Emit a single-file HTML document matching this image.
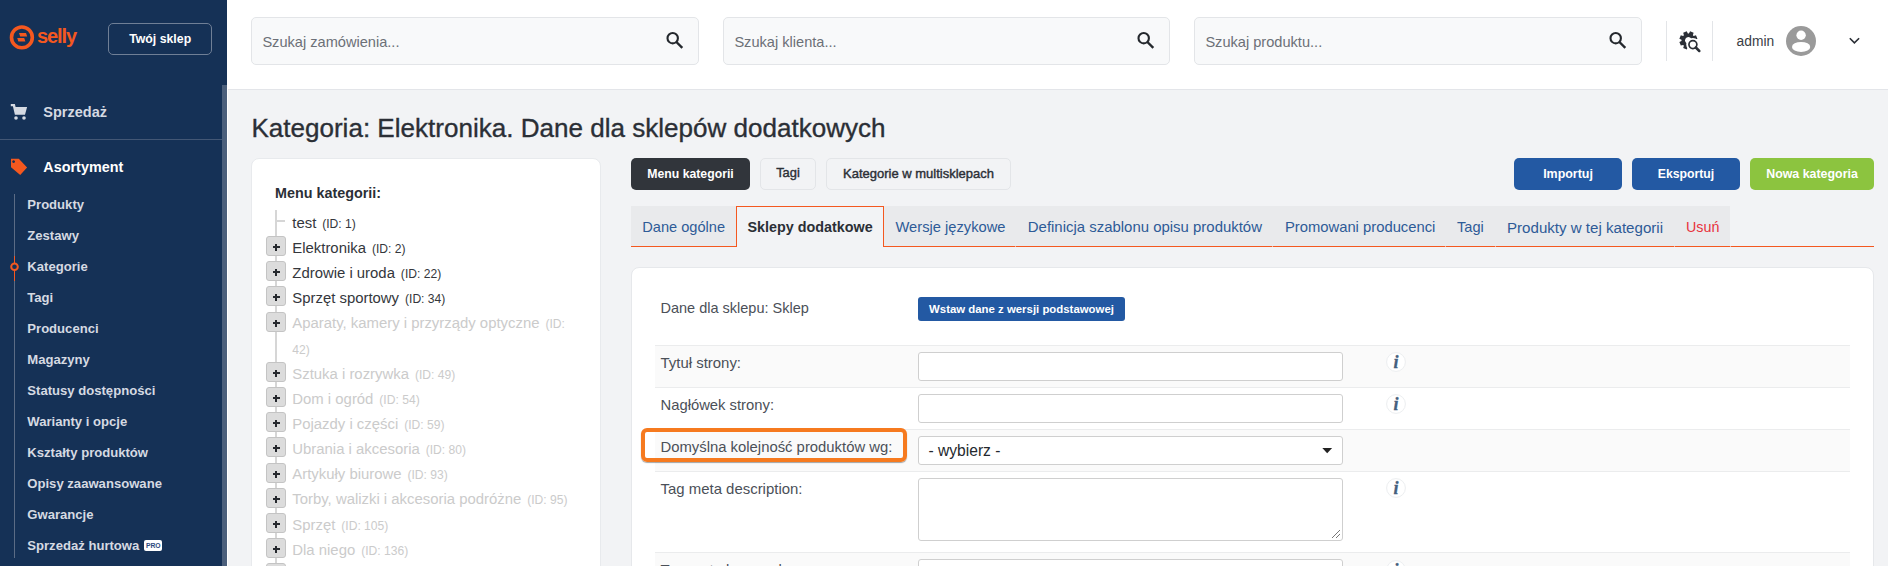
<!DOCTYPE html>
<html><head><meta charset="utf-8"><style>
html,body{margin:0;padding:0;}
body{width:1888px;height:566px;overflow:hidden;position:relative;background:#f2f3f5;font-family:'Liberation Sans', sans-serif;}
.t{position:absolute;white-space:nowrap;line-height:1;}
.b{position:absolute;box-sizing:border-box;}
svg{position:absolute;overflow:visible;}
</style></head><body>
<div class="b" style="left:0px;top:0px;width:227px;height:566px;background:#153156;"></div>
<div class="b" style="left:222px;top:85px;width:5px;height:481px;background:#4b5f7b;"></div>
<svg style="left:0;top:0" width="100" height="70">
<circle cx="21.9" cy="37.4" r="10.4" fill="none" stroke="#f4581f" stroke-width="3.6"/>
<polygon points="19,33.1 26,33.1 27.2,36.6 20.2,36.6" fill="#f4581f"/>
<polygon points="17.2,38.1 24.2,38.1 25.4,41.5 18.4,41.5" fill="#f4581f"/>
</svg>
<div class="t" style="left:37.0px;top:26.4px;font-size:20px;font-weight:700;color:#f4581f;letter-spacing:-1.1px;">selly</div>
<div class="b" style="left:108px;top:23px;width:104px;height:32px;border:1px solid #6f7f96;border-radius:5px;"></div>
<div class="t" style="left:129.2px;top:32.9px;font-size:12.3px;font-weight:700;color:#ffffff;">Twój sklep</div>
<svg style="left:0;top:0" width="40" height="130">
<polygon points="10.8,104 14.9,104 15.6,106.9 27.1,106.9 25,114.7 14.9,114.7 12.9,106.2 10.8,106.2" fill="#d5dae2"/>
<circle cx="16" cy="118" r="1.8" fill="#d5dae2"/>
<circle cx="24" cy="118" r="1.8" fill="#d5dae2"/>
</svg>
<div class="t" style="left:43.3px;top:104.7px;font-size:14.5px;font-weight:700;color:#d5dae2;">Sprzedaż</div>
<div class="b" style="left:0px;top:139px;width:222px;height:1px;background:#435775;"></div>
<svg style="left:0;top:0" width="40" height="190">
<path d="M11,158.8 L18.8,158.8 L27.1,167.5 L20.2,174.9 L11,167.3 Z M13.6,160.2 a1.4,1.4 0 1,0 0.01,0 Z" fill="#f4581f" fill-rule="evenodd"/>
</svg>
<div class="t" style="left:43.3px;top:160.2px;font-size:14.4px;font-weight:700;color:#ffffff;">Asortyment</div>
<div class="b" style="left:14px;top:194px;width:1px;height:364px;background:#5b6c85;"></div>
<div class="b" style="left:14px;top:256px;width:1px;height:25px;background:#f4581f;"></div>
<svg style="left:0;top:0" width="40" height="300"><circle cx="14.5" cy="266.8" r="3.3" fill="#153156" stroke="#f4581f" stroke-width="2"/></svg>
<div class="t" style="left:27.3px;top:198.3px;font-size:13.1px;font-weight:700;color:#d5dae2;">Produkty</div>
<div class="t" style="left:27.3px;top:229.3px;font-size:13.1px;font-weight:700;color:#d5dae2;">Zestawy</div>
<div class="t" style="left:27.3px;top:260.2px;font-size:13.1px;font-weight:700;color:#d5dae2;">Kategorie</div>
<div class="t" style="left:27.3px;top:291.2px;font-size:13.1px;font-weight:700;color:#d5dae2;">Tagi</div>
<div class="t" style="left:27.3px;top:322.1px;font-size:13.1px;font-weight:700;color:#d5dae2;">Producenci</div>
<div class="t" style="left:27.3px;top:353.1px;font-size:13.1px;font-weight:700;color:#d5dae2;">Magazyny</div>
<div class="t" style="left:27.3px;top:384.0px;font-size:13.1px;font-weight:700;color:#d5dae2;">Statusy dostępności</div>
<div class="t" style="left:27.3px;top:415.0px;font-size:13.1px;font-weight:700;color:#d5dae2;">Warianty i opcje</div>
<div class="t" style="left:27.3px;top:445.9px;font-size:13.1px;font-weight:700;color:#d5dae2;">Kształty produktów</div>
<div class="t" style="left:27.3px;top:476.9px;font-size:13.1px;font-weight:700;color:#d5dae2;">Opisy zaawansowane</div>
<div class="t" style="left:27.3px;top:507.8px;font-size:13.1px;font-weight:700;color:#d5dae2;">Gwarancje</div>
<div class="t" style="left:27.3px;top:538.8px;font-size:13.1px;font-weight:700;color:#d5dae2;">Sprzedaż hurtowa</div>
<div class="b" style="left:144px;top:540px;width:18px;height:11px;background:#ffffff;border-radius:2px;"></div>
<div class="t" style="left:145.9px;top:543.3px;font-size:6.8px;font-weight:700;color:#2e4a7e;">PRO</div>
<div class="b" style="left:227px;top:0px;width:1661px;height:89px;background:#ffffff;"></div>
<div class="b" style="left:228px;top:89px;width:1660px;height:1px;background:#e3e5e9;"></div>
<div class="b" style="left:227px;top:89px;width:1px;height:477px;background:#ffffff;"></div>
<div class="b" style="left:251px;top:17px;width:448px;height:48px;background:#f8f9fa;border:1px solid #e3e5e8;border-radius:5px;"></div>
<div class="t" style="left:262.4px;top:34.6px;font-size:14.6px;font-weight:400;color:#6c7077;">Szukaj zamówienia...</div>
<svg style="left:666px;top:31px" width="20" height="20">
<circle cx="6.7" cy="7.2" r="5.2" fill="none" stroke="#24282d" stroke-width="2.1"/>
<line x1="10.4" y1="11" x2="16.3" y2="16.9" stroke="#24282d" stroke-width="2.4"/>
</svg>
<div class="b" style="left:723px;top:17px;width:447px;height:48px;background:#f8f9fa;border:1px solid #e3e5e8;border-radius:5px;"></div>
<div class="t" style="left:734.4px;top:34.6px;font-size:14.6px;font-weight:400;color:#6c7077;">Szukaj klienta...</div>
<svg style="left:1137px;top:31px" width="20" height="20">
<circle cx="6.7" cy="7.2" r="5.2" fill="none" stroke="#24282d" stroke-width="2.1"/>
<line x1="10.4" y1="11" x2="16.3" y2="16.9" stroke="#24282d" stroke-width="2.4"/>
</svg>
<div class="b" style="left:1194px;top:17px;width:448px;height:48px;background:#f8f9fa;border:1px solid #e3e5e8;border-radius:5px;"></div>
<div class="t" style="left:1205.4px;top:34.6px;font-size:14.6px;font-weight:400;color:#6c7077;">Szukaj produktu...</div>
<svg style="left:1609px;top:31px" width="20" height="20">
<circle cx="6.7" cy="7.2" r="5.2" fill="none" stroke="#24282d" stroke-width="2.1"/>
<line x1="10.4" y1="11" x2="16.3" y2="16.9" stroke="#24282d" stroke-width="2.4"/>
</svg>
<div class="b" style="left:1666px;top:21px;width:1px;height:40px;background:#e3e5e8;"></div>
<div class="b" style="left:1712px;top:21px;width:1px;height:40px;background:#e3e5e8;"></div>
<svg style="left:1672px;top:24px" width="36" height="32">
<defs><clipPath id="gc"><path d="M-5,-5 H40 V40 H-5 Z M14.2,20.6 a6.7,6.7 0 1,0 13.4,0 a6.7,6.7 0 1,0 -13.4,0 Z" clip-rule="evenodd"/></clipPath></defs>
<g clip-path="url(#gc)" fill="#2b2f36">
<path fill-rule="evenodd" d="M16.94,9.52 L18.08,7.35 L21.61,8.82 L20.88,11.15 L21.65,11.92 L23.98,11.19 L25.45,14.72 L23.28,15.86 L23.28,16.94 L25.45,18.08 L23.98,21.61 L21.65,20.88 L20.88,21.65 L21.61,23.98 L18.08,25.45 L16.94,23.28 L15.86,23.28 L14.72,25.45 L11.19,23.98 L11.92,21.65 L11.15,20.88 L8.82,21.61 L7.35,18.08 L9.52,16.94 L9.52,15.86 L7.35,14.72 L8.82,11.19 L11.15,11.92 L11.92,11.15 L11.19,8.82 L14.72,7.35 L15.86,9.52 Z M16.4,13.0 a3.4,3.4 0 1,0 0.01,0 Z"/>
</g>
<circle cx="20.9" cy="20.6" r="3.95" fill="none" stroke="#2b2f36" stroke-width="1.7"/>
<line x1="23.8" y1="23.5" x2="27.3" y2="27.0" stroke="#2b2f36" stroke-width="2.5" stroke-linecap="round"/>
</svg>
<div class="t" style="left:1736.6px;top:34.7px;font-size:13.8px;font-weight:400;color:#3a3e45;">admin</div>
<svg style="left:1786px;top:26px" width="30" height="30">
<circle cx="15" cy="15" r="15" fill="#9a9a9a"/>
<circle cx="15.1" cy="9.2" r="4.7" fill="#ffffff"/>
<ellipse cx="15.1" cy="20.9" rx="9.1" ry="5.0" fill="#ffffff"/>
</svg>
<svg style="left:1846.5px;top:35px" width="14" height="12">
<polyline points="2.8,3.2 7.4,7.9 12.1,3.2" fill="none" stroke="#2b2f36" stroke-width="1.6"/>
</svg>
<div class="t" style="left:251.4px;top:115.4px;font-size:26.05px;font-weight:400;color:#2b2f36;-webkit-text-stroke:0.35px #2b2f36;">Kategoria: Elektronika. Dane dla sklepów dodatkowych</div>
<div class="b" style="left:251px;top:158px;width:350px;height:420px;background:#ffffff;border:1px solid #e8eaed;border-radius:8px;"></div>
<div class="t" style="left:275.0px;top:185.9px;font-size:14.35px;font-weight:700;color:#2b2f36;">Menu kategorii:</div>
<div class="b" style="left:275px;top:210px;width:2px;height:356px;background:#d6d6d6;"></div>
<div class="b" style="left:275px;top:220px;width:10px;height:2px;background:#d6d6d6;"></div>
<div class="t" style="left:292.3px;top:215.7px;font-size:14.9px;font-weight:400;color:#34373c;">test <span style="font-size:12.1px;margin-left:1.8px">(ID: 1)</span></div>
<div class="b" style="left:266px;top:236px;width:20px;height:20px;background:#dcdcdc;border:1px solid #c4c4c4;border-radius:3px;"></div>
<div class="b" style="left:272.5px;top:246.3px;width:7px;height:1.4px;background:#26292e;"></div>
<div class="b" style="left:275.3px;top:243.5px;width:1.4px;height:7px;background:#26292e;"></div>
<div class="t" style="left:292.3px;top:240.8px;font-size:14.9px;font-weight:400;color:#34373c;">Elektronika <span style="font-size:12.1px;margin-left:1.8px">(ID: 2)</span></div>
<div class="b" style="left:266px;top:261px;width:20px;height:20px;background:#dcdcdc;border:1px solid #c4c4c4;border-radius:3px;"></div>
<div class="b" style="left:272.5px;top:271.3px;width:7px;height:1.4px;background:#26292e;"></div>
<div class="b" style="left:275.3px;top:268.5px;width:1.4px;height:7px;background:#26292e;"></div>
<div class="t" style="left:292.3px;top:266.0px;font-size:14.9px;font-weight:400;color:#34373c;">Zdrowie i uroda <span style="font-size:12.1px;margin-left:1.8px">(ID: 22)</span></div>
<div class="b" style="left:266px;top:286px;width:20px;height:20px;background:#dcdcdc;border:1px solid #c4c4c4;border-radius:3px;"></div>
<div class="b" style="left:272.5px;top:296.3px;width:7px;height:1.4px;background:#26292e;"></div>
<div class="b" style="left:275.3px;top:293.5px;width:1.4px;height:7px;background:#26292e;"></div>
<div class="t" style="left:292.3px;top:291.1px;font-size:14.9px;font-weight:400;color:#34373c;">Sprzęt sportowy <span style="font-size:12.1px;margin-left:1.8px">(ID: 34)</span></div>
<div class="b" style="left:266px;top:312px;width:20px;height:20px;background:#dcdcdc;border:1px solid #c4c4c4;border-radius:3px;"></div>
<div class="b" style="left:272.5px;top:322.3px;width:7px;height:1.4px;background:#26292e;"></div>
<div class="b" style="left:275.3px;top:319.5px;width:1.4px;height:7px;background:#26292e;"></div>
<div class="t" style="left:292.3px;top:316.3px;font-size:14.9px;font-weight:400;color:#cbcbcb;">Aparaty, kamery i przyrządy optyczne <span style="font-size:12.1px;margin-left:1.8px">(ID:</span></div>
<div class="t" style="left:292.3px;top:343.8px;font-size:12.1px;font-weight:400;color:#cbcbcb;">42)</div>
<div class="b" style="left:266px;top:362px;width:20px;height:20px;background:#dcdcdc;border:1px solid #c4c4c4;border-radius:3px;"></div>
<div class="b" style="left:272.5px;top:372.3px;width:7px;height:1.4px;background:#26292e;"></div>
<div class="b" style="left:275.3px;top:369.5px;width:1.4px;height:7px;background:#26292e;"></div>
<div class="t" style="left:292.3px;top:366.6px;font-size:14.9px;font-weight:400;color:#cbcbcb;">Sztuka i rozrywka <span style="font-size:12.1px;margin-left:1.8px">(ID: 49)</span></div>
<div class="b" style="left:266px;top:387px;width:20px;height:20px;background:#dcdcdc;border:1px solid #c4c4c4;border-radius:3px;"></div>
<div class="b" style="left:272.5px;top:397.3px;width:7px;height:1.4px;background:#26292e;"></div>
<div class="b" style="left:275.3px;top:394.5px;width:1.4px;height:7px;background:#26292e;"></div>
<div class="t" style="left:292.3px;top:391.7px;font-size:14.9px;font-weight:400;color:#cbcbcb;">Dom i ogród <span style="font-size:12.1px;margin-left:1.8px">(ID: 54)</span></div>
<div class="b" style="left:266px;top:412px;width:20px;height:20px;background:#dcdcdc;border:1px solid #c4c4c4;border-radius:3px;"></div>
<div class="b" style="left:272.5px;top:422.3px;width:7px;height:1.4px;background:#26292e;"></div>
<div class="b" style="left:275.3px;top:419.5px;width:1.4px;height:7px;background:#26292e;"></div>
<div class="t" style="left:292.3px;top:416.9px;font-size:14.9px;font-weight:400;color:#cbcbcb;">Pojazdy i części <span style="font-size:12.1px;margin-left:1.8px">(ID: 59)</span></div>
<div class="b" style="left:266px;top:437px;width:20px;height:20px;background:#dcdcdc;border:1px solid #c4c4c4;border-radius:3px;"></div>
<div class="b" style="left:272.5px;top:447.3px;width:7px;height:1.4px;background:#26292e;"></div>
<div class="b" style="left:275.3px;top:444.5px;width:1.4px;height:7px;background:#26292e;"></div>
<div class="t" style="left:292.3px;top:442.0px;font-size:14.9px;font-weight:400;color:#cbcbcb;">Ubrania i akcesoria <span style="font-size:12.1px;margin-left:1.8px">(ID: 80)</span></div>
<div class="b" style="left:266px;top:463px;width:20px;height:20px;background:#dcdcdc;border:1px solid #c4c4c4;border-radius:3px;"></div>
<div class="b" style="left:272.5px;top:473.3px;width:7px;height:1.4px;background:#26292e;"></div>
<div class="b" style="left:275.3px;top:470.5px;width:1.4px;height:7px;background:#26292e;"></div>
<div class="t" style="left:292.3px;top:467.2px;font-size:14.9px;font-weight:400;color:#cbcbcb;">Artykuły biurowe <span style="font-size:12.1px;margin-left:1.8px">(ID: 93)</span></div>
<div class="b" style="left:266px;top:488px;width:20px;height:20px;background:#dcdcdc;border:1px solid #c4c4c4;border-radius:3px;"></div>
<div class="b" style="left:272.5px;top:498.3px;width:7px;height:1.4px;background:#26292e;"></div>
<div class="b" style="left:275.3px;top:495.5px;width:1.4px;height:7px;background:#26292e;"></div>
<div class="t" style="left:292.3px;top:492.3px;font-size:14.9px;font-weight:400;color:#cbcbcb;">Torby, walizki i akcesoria podróżne <span style="font-size:12.1px;margin-left:1.8px">(ID: 95)</span></div>
<div class="b" style="left:266px;top:513px;width:20px;height:20px;background:#dcdcdc;border:1px solid #c4c4c4;border-radius:3px;"></div>
<div class="b" style="left:272.5px;top:523.3px;width:7px;height:1.4px;background:#26292e;"></div>
<div class="b" style="left:275.3px;top:520.5px;width:1.4px;height:7px;background:#26292e;"></div>
<div class="t" style="left:292.3px;top:517.5px;font-size:14.9px;font-weight:400;color:#cbcbcb;">Sprzęt <span style="font-size:12.1px;margin-left:1.8px">(ID: 105)</span></div>
<div class="b" style="left:266px;top:538px;width:20px;height:20px;background:#dcdcdc;border:1px solid #c4c4c4;border-radius:3px;"></div>
<div class="b" style="left:272.5px;top:548.3px;width:7px;height:1.4px;background:#26292e;"></div>
<div class="b" style="left:275.3px;top:545.5px;width:1.4px;height:7px;background:#26292e;"></div>
<div class="t" style="left:292.3px;top:542.6px;font-size:14.9px;font-weight:400;color:#cbcbcb;">Dla niego <span style="font-size:12.1px;margin-left:1.8px">(ID: 136)</span></div>
<div class="b" style="left:266px;top:563px;width:20px;height:20px;background:#dcdcdc;border:1px solid #c4c4c4;border-radius:3px;"></div>
<div class="b" style="left:272.5px;top:573.3px;width:7px;height:1.4px;background:#26292e;"></div>
<div class="b" style="left:275.3px;top:570.5px;width:1.4px;height:7px;background:#26292e;"></div>
<div class="t" style="left:292.3px;top:567.8px;font-size:14.9px;font-weight:400;color:#cbcbcb;">Dla niej <span style="font-size:12.1px;margin-left:1.8px">(ID: 137)</span></div>
<div class="b" style="left:631px;top:158px;width:119px;height:32px;background:#31353b;border-radius:5px;"></div>
<div class="t" style="left:631px;width:119px;text-align:center;top:167.9px;font-size:12.25px;font-weight:700;color:#ffffff;">Menu kategorii</div>
<div class="b" style="left:760px;top:158px;width:56px;height:32px;background:#f2f3f5;border-radius:5px;border:1px solid #e3e5e8;"></div>
<div class="t" style="left:760px;width:56px;text-align:center;top:167.4px;font-size:12.9px;font-weight:400;color:#2b2f36;-webkit-text-stroke:0.4px #2b2f36;">Tagi</div>
<div class="b" style="left:826px;top:158px;width:185px;height:32px;background:#f2f3f5;border-radius:5px;border:1px solid #e3e5e8;"></div>
<div class="t" style="left:826px;width:185px;text-align:center;top:167.3px;font-size:13.0px;font-weight:400;color:#2b2f36;-webkit-text-stroke:0.4px #2b2f36;">Kategorie w multisklepach</div>
<div class="b" style="left:1514px;top:158px;width:108px;height:32px;background:#2359a3;border-radius:5px;"></div>
<div class="t" style="left:1514px;width:108px;text-align:center;top:167.8px;font-size:12.45px;font-weight:700;color:#ffffff;">Importuj</div>
<div class="b" style="left:1632px;top:158px;width:108px;height:32px;background:#2359a3;border-radius:5px;"></div>
<div class="t" style="left:1632px;width:108px;text-align:center;top:167.9px;font-size:12.25px;font-weight:700;color:#ffffff;">Eksportuj</div>
<div class="b" style="left:1750px;top:158px;width:124px;height:32px;background:#8cc43f;border-radius:5px;"></div>
<div class="t" style="left:1750px;width:124px;text-align:center;top:167.8px;font-size:12.4px;font-weight:700;color:#ffffff;">Nowa kategoria</div>
<div class="b" style="left:631px;top:206px;width:1099px;height:40px;background:#e9eaec;"></div>
<div class="b" style="left:631px;top:246px;width:1243px;height:1px;background:#f4581f;"></div>
<div class="t" style="left:642.3px;top:219.9px;font-size:14.6px;font-weight:400;color:#2e5b97;">Dane ogólne</div>
<div class="b" style="left:736px;top:206px;width:148px;height:41px;background:#f2f3f5;border:1px solid #f4581f;border-bottom:none;"></div>
<div class="t" style="left:747.5px;top:220.2px;font-size:14.35px;font-weight:700;color:#2b2f36;">Sklepy dodatkowe</div>
<div class="t" style="left:895.5px;top:219.9px;font-size:14.7px;font-weight:400;color:#2e5b97;">Wersje językowe</div>
<div class="t" style="left:1027.8px;top:219.7px;font-size:14.95px;font-weight:400;color:#2e5b97;">Definicja szablonu opisu produktów</div>
<div class="t" style="left:1284.9px;top:219.8px;font-size:14.8px;font-weight:400;color:#2e5b97;">Promowani producenci</div>
<div class="t" style="left:1457.0px;top:219.9px;font-size:14.6px;font-weight:400;color:#2e5b97;">Tagi</div>
<div class="t" style="left:1507.0px;top:219.5px;font-size:15.1px;font-weight:400;color:#2e5b97;">Produkty w tej kategorii</div>
<div class="t" style="left:1686.0px;top:220.2px;font-size:14.3px;font-weight:400;color:#e8323c;">Usuń</div>
<div class="b" style="left:1015px;top:246px;width:1px;height:1px;background:#f4b49a;"></div>
<div class="b" style="left:1272px;top:246px;width:1px;height:1px;background:#f4b49a;"></div>
<div class="b" style="left:1445px;top:246px;width:1px;height:1px;background:#f4b49a;"></div>
<div class="b" style="left:1495px;top:246px;width:1px;height:1px;background:#f4b49a;"></div>
<div class="b" style="left:1674px;top:246px;width:1px;height:1px;background:#f4b49a;"></div>
<div class="b" style="left:1730px;top:246px;width:1px;height:1px;background:#f4b49a;"></div>
<div class="b" style="left:631px;top:267px;width:1243px;height:320px;background:#ffffff;border:1px solid #e6e8eb;border-radius:8px;"></div>
<div class="t" style="left:660.5px;top:300.7px;font-size:14.5px;font-weight:400;color:#4b5058;">Dane dla sklepu: Sklep</div>
<div class="b" style="left:918px;top:297px;width:207px;height:24px;background:#2359a3;border-radius:3px;"></div>
<div class="t" style="left:918px;width:207px;text-align:center;top:303.7px;font-size:11.4px;font-weight:700;color:#fff;">Wstaw dane z wersji podstawowej</div>
<div class="b" style="left:655px;top:345px;width:1195px;height:1px;background:#ebeced;"></div>
<div class="b" style="left:655px;top:346px;width:1195px;height:41px;background:#fafafa;"></div>
<div class="b" style="left:655px;top:387px;width:1195px;height:1px;background:#ebeced;"></div>
<div class="b" style="left:655px;top:429px;width:1195px;height:1px;background:#ebeced;"></div>
<div class="b" style="left:655px;top:430px;width:1195px;height:41px;background:#fafafa;"></div>
<div class="b" style="left:655px;top:471px;width:1195px;height:1px;background:#ebeced;"></div>
<div class="b" style="left:655px;top:552px;width:1195px;height:1px;background:#ebeced;"></div>
<div class="b" style="left:655px;top:553px;width:1195px;height:47px;background:#fafafa;"></div>
<div class="b" style="left:918px;top:352px;width:425px;height:29px;background:#fff;border:1px solid #cfcfcf;border-radius:3px;"></div>
<div class="b" style="left:918px;top:394px;width:425px;height:29px;background:#fff;border:1px solid #cfcfcf;border-radius:3px;"></div>
<div class="b" style="left:918px;top:436px;width:425px;height:29px;background:#fff;border:1px solid #cfcfcf;border-radius:3px;"></div>
<div class="b" style="left:918px;top:478px;width:425px;height:63px;background:#fff;border:1px solid #cfcfcf;border-radius:3px;"></div>
<div class="b" style="left:918px;top:559px;width:425px;height:29px;background:#fff;border:1px solid #cfcfcf;border-radius:3px;"></div>
<div class="t" style="left:660.5px;top:356.4px;font-size:14.95px;font-weight:400;color:#4b5058;">Tytuł strony:</div>
<div class="t" style="left:660.5px;top:398.3px;font-size:14.8px;font-weight:400;color:#4b5058;">Nagłówek strony:</div>
<div class="t" style="left:660.5px;top:439.9px;font-size:14.85px;font-weight:400;color:#4b5058;">Domyślna kolejność produktów wg:</div>
<div class="t" style="left:660.5px;top:481.9px;font-size:14.95px;font-weight:400;color:#4b5058;">Tag meta description:</div>
<div class="t" style="left:660.5px;top:562.7px;font-size:14.95px;font-weight:400;color:#4b5058;">Tag meta keywords:</div>
<div class="t" style="left:928.5px;top:443.4px;font-size:15.6px;font-weight:400;color:#24282d;">- wybierz -</div>
<svg style="left:1320px;top:446px" width="14" height="10"><polygon points="2.3,2 12.1,2 7.2,7.3" fill="#222"/></svg>
<svg style="left:1328px;top:526px" width="14" height="14"><line x1="4" y1="12" x2="12" y2="4" stroke="#777" stroke-width="1"/><line x1="8" y1="12" x2="12" y2="8" stroke="#777" stroke-width="1"/></svg>
<svg style="left:1386px;top:352px" width="20" height="20">
<circle cx="10" cy="10" r="9.4" fill="#fff" stroke="#eceef0" stroke-width="1"/>
<text x="10.0" y="16.3" text-anchor="middle" font-family="Liberation Serif" font-style="italic" font-weight="700" font-size="18" fill="#45607d" stroke="#45607d" stroke-width="0.3">i</text>
</svg>
<svg style="left:1386px;top:394px" width="20" height="20">
<circle cx="10" cy="10" r="9.4" fill="#fff" stroke="#eceef0" stroke-width="1"/>
<text x="10.0" y="16.3" text-anchor="middle" font-family="Liberation Serif" font-style="italic" font-weight="700" font-size="18" fill="#45607d" stroke="#45607d" stroke-width="0.3">i</text>
</svg>
<svg style="left:1386px;top:478px" width="20" height="20">
<circle cx="10" cy="10" r="9.4" fill="#fff" stroke="#eceef0" stroke-width="1"/>
<text x="10.0" y="16.3" text-anchor="middle" font-family="Liberation Serif" font-style="italic" font-weight="700" font-size="18" fill="#45607d" stroke="#45607d" stroke-width="0.3">i</text>
</svg>
<svg style="left:1386px;top:560px" width="20" height="20">
<circle cx="10" cy="10" r="9.4" fill="#fff" stroke="#eceef0" stroke-width="1"/>
<text x="10.0" y="16.3" text-anchor="middle" font-family="Liberation Serif" font-style="italic" font-weight="700" font-size="18" fill="#45607d" stroke="#45607d" stroke-width="0.3">i</text>
</svg>
<div class="b" style="left:641px;top:428px;width:266px;height:34px;border:4px solid #f67a1f;border-radius:6px;box-shadow:0 1px 1px rgba(0,0,0,0.35);"></div>
</body></html>
